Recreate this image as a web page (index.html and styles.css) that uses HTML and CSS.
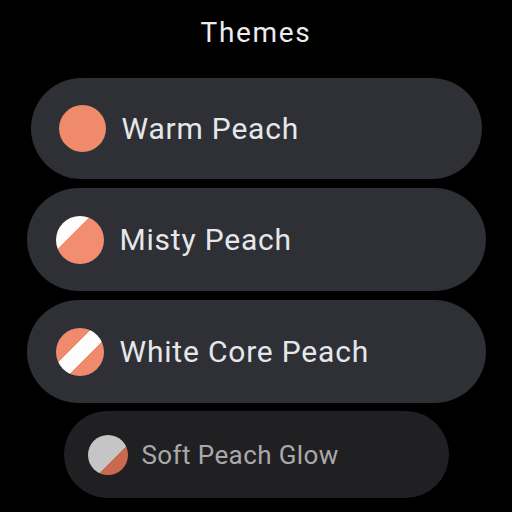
FILE: index.html
```html
<!DOCTYPE html>
<html lang="en">
<head>
    <meta charset="UTF-8">
    <meta name="viewport" content="width=device-width, initial-scale=1.0">
    <title>Themes</title>
    <link rel="stylesheet" href="styles.css">
</head>
<body>

<div class="screen">
    <h1 class="title">Themes</h1>

    <ul class="theme-list">
        <li class="chip chip-near">
            <span class="swatch swatch-warm"></span>
            <span class="chip-label">Warm Peach</span>
        </li>
        <li class="chip">
            <span class="swatch swatch-misty"></span>
            <span class="chip-label">Misty Peach</span>
        </li>
        <li class="chip">
            <span class="swatch swatch-core"></span>
            <span class="chip-label">White Core Peach</span>
        </li>
        <li class="chip chip-far">
            <span class="swatch swatch-glow"></span>
            <span class="chip-label">Soft Peach Glow</span>
        </li>
    </ul>
</div>

</body>
</html>
```

FILE: styles.css
```css
body {
    margin: 0;
    background: #000;
    font-family: Roboto, "Noto Sans", sans-serif;
}
.screen {
    width: 512px;
    height: 512px;
    overflow: hidden;
    display: flex;
    flex-direction: column;
    align-items: center;
}
.title {
    margin: 0;
    padding-top: 16px;
    font-size: 28px;
    font-weight: 400;
    line-height: 34px;
    letter-spacing: 1.7px;
    color: #ececef;
}
.theme-list {
    list-style: none;
    margin: 28px 0 0;
    padding: 0;
    display: flex;
    flex-direction: column;
    align-items: center;
    gap: 9px;
}
.chip {
    box-sizing: border-box;
    width: 459px;
    height: 103px;
    padding-left: 29px;
    display: flex;
    align-items: center;
    gap: 16px;
    background: #2e3035;
    border-radius: 52px;
}
.chip-near {
    width: 451px;
    height: 101px;
    padding-left: 28px;
    gap: 16px;
}
.chip-far {
    width: 385px;
    height: 87px;
    margin-top: -1px;
    padding-left: 24px;
    gap: 14px;
    background: #202023;
}
.chip-label {
    font-size: 30px;
    letter-spacing: 0.8px;
    color: #e6e7ea;
    white-space: nowrap;
}
.chip-far .chip-label {
    font-size: 26px;
    letter-spacing: 0.4px;
    color: #a9a9ac;
}
.swatch {
    flex: none;
    width: 48px;
    height: 48px;
    border-radius: 50%;
}
.chip-far .swatch {
    width: 40px;
    height: 40px;
}
/* colour dots: diagonal splits drawn with hard-stop gradients */
.swatch-warm {
    width: 47px;
    height: 47px;
    background: #ef8a6b;
}
.swatch-misty {
    background: linear-gradient(135deg, #fdfdfc 0 36%, #f28d71 36%);
}
.swatch-core {
    background: linear-gradient(135deg, #f08a6c 0 38%, #fdfdfc 38% 62%, #f08a6c 62%);
}
.swatch-glow {
    background: linear-gradient(135deg, #c5c5c5 0 62%, #c9694f 62%);
}
```
